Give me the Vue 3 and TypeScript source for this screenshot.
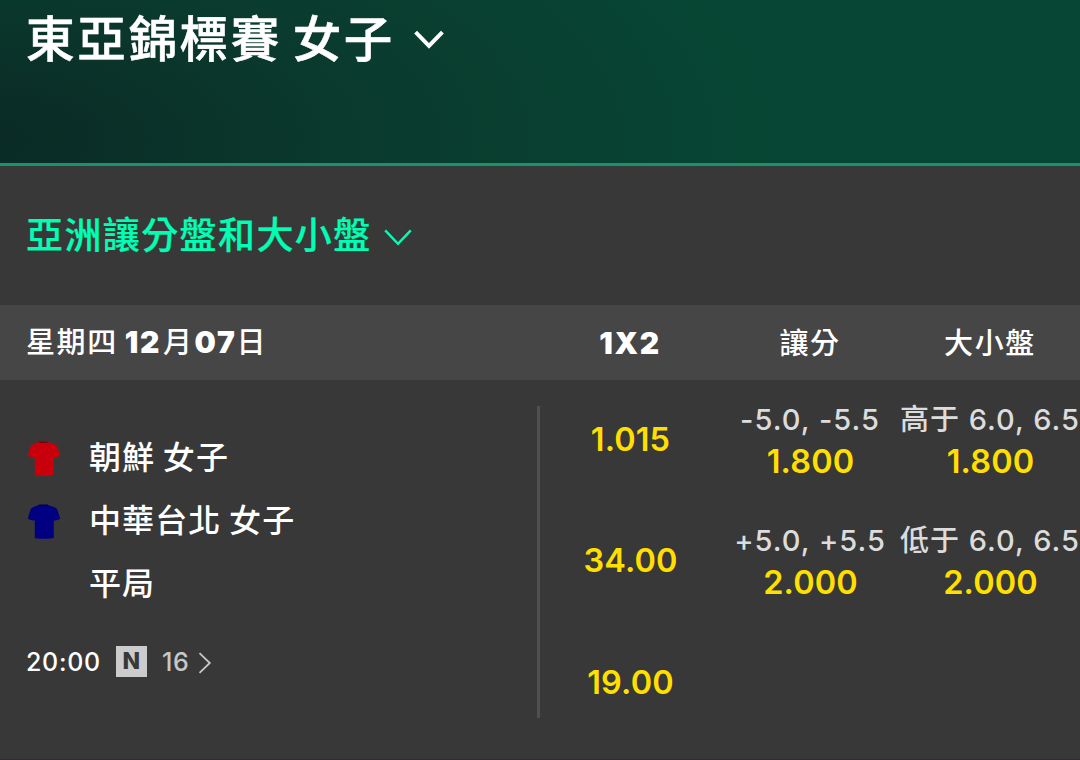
<template>
  <div class="page">
    <header class="hero">
      <h1 class="hero-title">{{ competition }}</h1>
      <svg class="hero-arrow" width="30" height="20" viewBox="0 0 30 20">
        <path d="M1.6 2.2 L15 15.8 L28.4 2.2" />
      </svg>
    </header>

    <div class="market">
      <h2 class="market-title">{{ market }}</h2>
      <svg class="market-arrow" width="28" height="18" viewBox="0 0 28 18">
        <path d="M1.2 1.4 L14 14.8 L26.8 1.4" />
      </svg>
    </div>

    <div class="table-head">
      <div class="date"><span class="date-day">星期四</span><b>12</b><span class="date-month">月</span><b>07</b>日</div>
      <div v-for="col in columns" :key="col.title" class="col-title">
        <b v-if="col.latin">{{ col.title }}</b>
        <span v-else>{{ col.title }}</span>
      </div>
    </div>

    <div class="fixture">
      <div class="fixture-info">
        <div v-for="team in teams" :key="team.name" class="team">
          <div class="kit">
            <svg v-if="team.kit" width="34" height="36" viewBox="0 0 34 36" :class="team.kit">
              <path
                d="M11.5 1 H21 L27.6 3.2 Q29.8 4 30.6 6.4 L33.2 14.6 Q30.6 16.8 26.8 16.4 V34 Q17 35.6 7.8 34.2 V16.4 Q3.4 16.8 .8 14.6 L3.2 6.4 Q3.9 4 6 3.2 Z"
              />
              <path class="collar" d="M11.5 .6 H21 L19.8 2 H12.8 Z" />
            </svg>
          </div>
          <span class="team-name">{{ team.name }}</span>
        </div>
        <div class="meta">
          <span class="time">20:00</span>
          <span class="badge">N</span>
          <span class="count">16</span>
          <svg width="14" height="22" viewBox="0 0 14 22">
            <path d="M1.5 1.2 L11.8 11 L1.5 20.8" />
          </svg>
        </div>
      </div>

      <div class="divider"></div>

      <div v-for="col in columns" :key="col.title" class="col">
        <div v-for="(cell, i) in col.cells" :key="i" class="cell" :class="{ single: !cell.line }">
          <span v-if="cell.line" class="line">{{ cell.line }}</span>
          <span class="odds">{{ cell.odds }}</span>
        </div>
      </div>
    </div>
  </div>
</template>

<script setup lang="ts">
interface Team {
  name: string;
  kit?: 'red' | 'blue';
}

interface Cell {
  line?: string;
  odds: string;
}

interface Column {
  title: string;
  latin?: boolean;
  cells: Cell[];
}

const competition = '東亞錦標賽 女子';
const market = '亞洲讓分盤和大小盤';

const teams: Team[] = [
  { name: '朝鮮 女子', kit: 'red' },
  { name: '中華台北 女子', kit: 'blue' },
  { name: '平局' },
];

const columns: Column[] = [
  {
    title: '1X2',
    latin: true,
    cells: [{ odds: '1.015' }, { odds: '34.00' }, { odds: '19.00' }],
  },
  {
    title: '讓分',
    cells: [
      { line: '-5.0, -5.5', odds: '1.800' },
      { line: '+5.0, +5.5', odds: '2.000' },
    ],
  },
  {
    title: '大小盤',
    cells: [
      { line: '高于 6.0, 6.5', odds: '1.800' },
      { line: '低于 6.0, 6.5', odds: '2.000' },
    ],
  },
];
</script>

<style>
body {
  margin: 0;
  background: #383838;
}
</style>

<style scoped>
.page {
  box-sizing: border-box;
  width: 1080px;
  height: 760px;
  overflow: hidden;
  background: #383838;
  border-bottom: 1px solid #332d31;
  color: #fff;
  font-family: Inter, "Noto Sans CJK TC", sans-serif;
  white-space: nowrap;
}

svg path {
  fill: none;
}

.hero {
  box-sizing: border-box;
  display: flex;
  align-items: flex-start;
  height: 166px;
  padding-left: 26px;
  border-bottom: 3px solid #18946a;
  background: radial-gradient(ellipse 1000px 440px at -20px 140px, #0a2a25 0%, #0a3b2e 40%, #074634 80%);
}

.hero-title {
  margin: 4px 0 0;
  font-size: 48.5px;
  line-height: 72px;
  font-weight: 500;
  letter-spacing: 2.7px;
  word-spacing: -5px;
  -webkit-text-stroke: 0.6px #fff;
}

.hero-arrow {
  margin: 30px 0 0 19px;
}

.hero-arrow path {
  stroke: #fff;
  stroke-width: 4;
}

.market {
  display: flex;
  align-items: center;
  height: 139px;
  padding-left: 26px;
}

.market-title {
  margin: 0;
  font-size: 37px;
  line-height: 54px;
  font-weight: 500;
  letter-spacing: 1.4px;
  color: #00ffb4;
  -webkit-text-stroke: 0.2px #00ffb4;
}

.market-arrow {
  margin: 4px 0 0 12px;
}

.market-arrow path {
  stroke: #00ffb4;
  stroke-width: 2.4;
}

.table-head {
  display: grid;
  grid-template-columns: 540px 180px 180px 180px;
  align-items: center;
  height: 75px;
  background: #464646;
  font-size: 29px;
  font-weight: 500;
  letter-spacing: 1.6px;
}

.table-head b {
  font-size: 30px;
  font-weight: 900;
}

.date {
  padding: 0 0 5px 26px;
}

.date-day {
  margin-right: 7px;
}

.date-month {
  margin: 0 1px 0 2px;
}

.col-title {
  text-align: center;
}

.col-title span {
  display: block;
  padding-bottom: 4px;
}

.fixture {
  display: grid;
  grid-template-columns: 537px 3px repeat(3, 180px);
  height: 379px;
}

.fixture-info {
  padding: 47px 0 0 26px;
}

.team {
  display: flex;
  align-items: center;
  height: 63px;
  font-size: 32px;
  font-weight: 500;
  letter-spacing: 1.1px;
  word-spacing: -2px;
}

.team-name {
  padding-bottom: 7px;
}

.kit {
  box-sizing: border-box;
  width: 63px;
  height: 36px;
  padding-left: 1px;
}

.kit svg {
  display: block;
}

.red path {
  fill: #c7000b;
}

.blue path {
  fill: #000080;
}

.red .collar {
  fill: #7d0007;
}

.blue .collar {
  fill: #00004a;
}

.meta {
  display: flex;
  align-items: center;
  height: 32px;
  margin-top: 29px;
  font-size: 25px;
  font-weight: 500;
  letter-spacing: 0.7px;
}

.meta svg {
  margin-top: 3px;
}

.time,
.count {
  padding-top: 2px;
}

.badge {
  width: 31px;
  height: 31px;
  margin: 0 15px;
  background: #ccc;
  color: #383838;
  font-size: 23px;
  line-height: 30px;
  font-weight: 800;
  letter-spacing: 0;
  text-align: center;
}

.count {
  margin-right: 9px;
  color: #c8c8c8;
}

.meta path {
  stroke: #c8c8c8;
  stroke-width: 1.8;
}

.divider {
  height: 312px;
  margin-top: 26px;
  background: #505050;
}

.col {
  display: grid;
  grid-template-rows: repeat(3, 121.5px);
}

.cell {
  display: flex;
  flex-direction: column;
  align-items: center;
  justify-content: center;
}

.single {
  padding-bottom: 2px;
}

.line {
  font-size: 29px;
  line-height: 42px;
  font-weight: 500;
  letter-spacing: 1px;
  color: #dcdcdc;
}

.odds {
  padding-left: 1px;
  font-size: 32.5px;
  line-height: 42px;
  font-weight: 600;
  letter-spacing: 0.1px;
  color: #ffdf00;
}
</style>
